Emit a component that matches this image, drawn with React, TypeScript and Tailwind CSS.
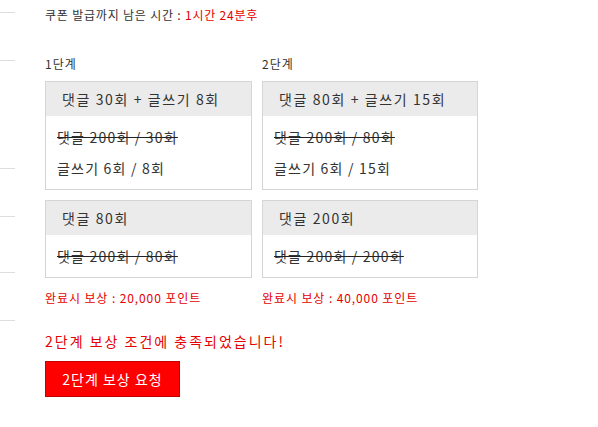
const font = { fontFamily: '"Noto Sans CJK KR", "Noto Sans", sans-serif' };

const stages = [
  {
    label: "1단계",
    width: "w-[207px]",
    reward: "완료시 보상 : 20,000 포인트",
    boxes: [
      {
        title: "댓글 30회 + 글쓰기 8회",
        rows: [
          { text: "댓글 200회 / 30회", done: true },
          { text: "글쓰기 6회 / 8회", done: false },
        ],
      },
      {
        title: "댓글 80회",
        rows: [{ text: "댓글 200회 / 80회", done: true }],
      },
    ],
  },
  {
    label: "2단계",
    width: "w-[216px]",
    reward: "완료시 보상 : 40,000 포인트",
    boxes: [
      {
        title: "댓글 80회 + 글쓰기 15회",
        rows: [
          { text: "댓글 200회 / 80회", done: true },
          { text: "글쓰기 6회 / 15회", done: false },
        ],
      },
      {
        title: "댓글 200회",
        rows: [{ text: "댓글 200회 / 200회", done: true }],
      },
    ],
  },
];

export default function App() {
  return (
    <div className="flex min-h-[427px] bg-white" style={font}>
      {/* left edge menu lines */}
      <div className="flex w-[15px] flex-col">
        <div className="mt-[12px] h-px bg-[#dedede]" />
        <div className="mt-[47px] h-px bg-[#dedede]" />
        <div className="mt-[107px] h-px bg-[#dedede]" />
        <div className="mt-[47px] h-px bg-[#dedede]" />
        <div className="mt-[55px] h-px bg-[#dedede]" />
        <div className="mt-[47px] h-px bg-[#dedede]" />
      </div>

      <div className="pl-[30px] pt-[6px]">
        <p className="text-[12px] leading-[18px] tracking-[0.8px] text-[#333]">
          쿠폰 발급까지 남은 시간 : <span className="text-[#e60000]">1시간 24분후</span>
        </p>

        <div className="mt-[31px] flex gap-[10px]">
          {stages.map((s) => (
            <div key={s.label} className={s.width}>
              <p className="mb-[8px] text-[12px] leading-[18px] tracking-[1px] text-[#333]">{s.label}</p>
              <div className="flex flex-col gap-[10px]">
                {s.boxes.map((b) => (
                  <div key={b.title} className="border border-[#d5d5d5]">
                    <div className="bg-[#ebebeb] pl-[16px] text-[14px] leading-[34px] tracking-[1.6px] text-[#333]">
                      {b.title}
                    </div>
                    <div className="flex flex-col gap-[11px] px-[11px] py-[11px]">
                      {b.rows.map((r) => (
                        <p
                          key={r.text}
                          className={
                            "text-[14px] leading-[20px] tracking-[1.2px] text-[#333] " +
                            (r.done ? "line-through decoration-[#222]" : "")
                          }
                        >
                          {r.text}
                        </p>
                      ))}
                    </div>
                  </div>
                ))}
              </div>
              <p className="mt-[11px] text-[12px] leading-[18px] tracking-[0.9px] text-[#e60000]">{s.reward}</p>
            </div>
          ))}
        </div>

        <p className="mt-[24px] text-[14px] leading-[20px] tracking-[2px] text-[#e60000]">
          2단계 보상 조건에 충족되었습니다!
        </p>
        <button className="mt-[10px] h-[36px] w-[135px] border border-[#c40000] bg-[#ff0000] text-[14px] tracking-[1px] text-white">
          2단계 보상 요청
        </button>
      </div>
    </div>
  );
}
